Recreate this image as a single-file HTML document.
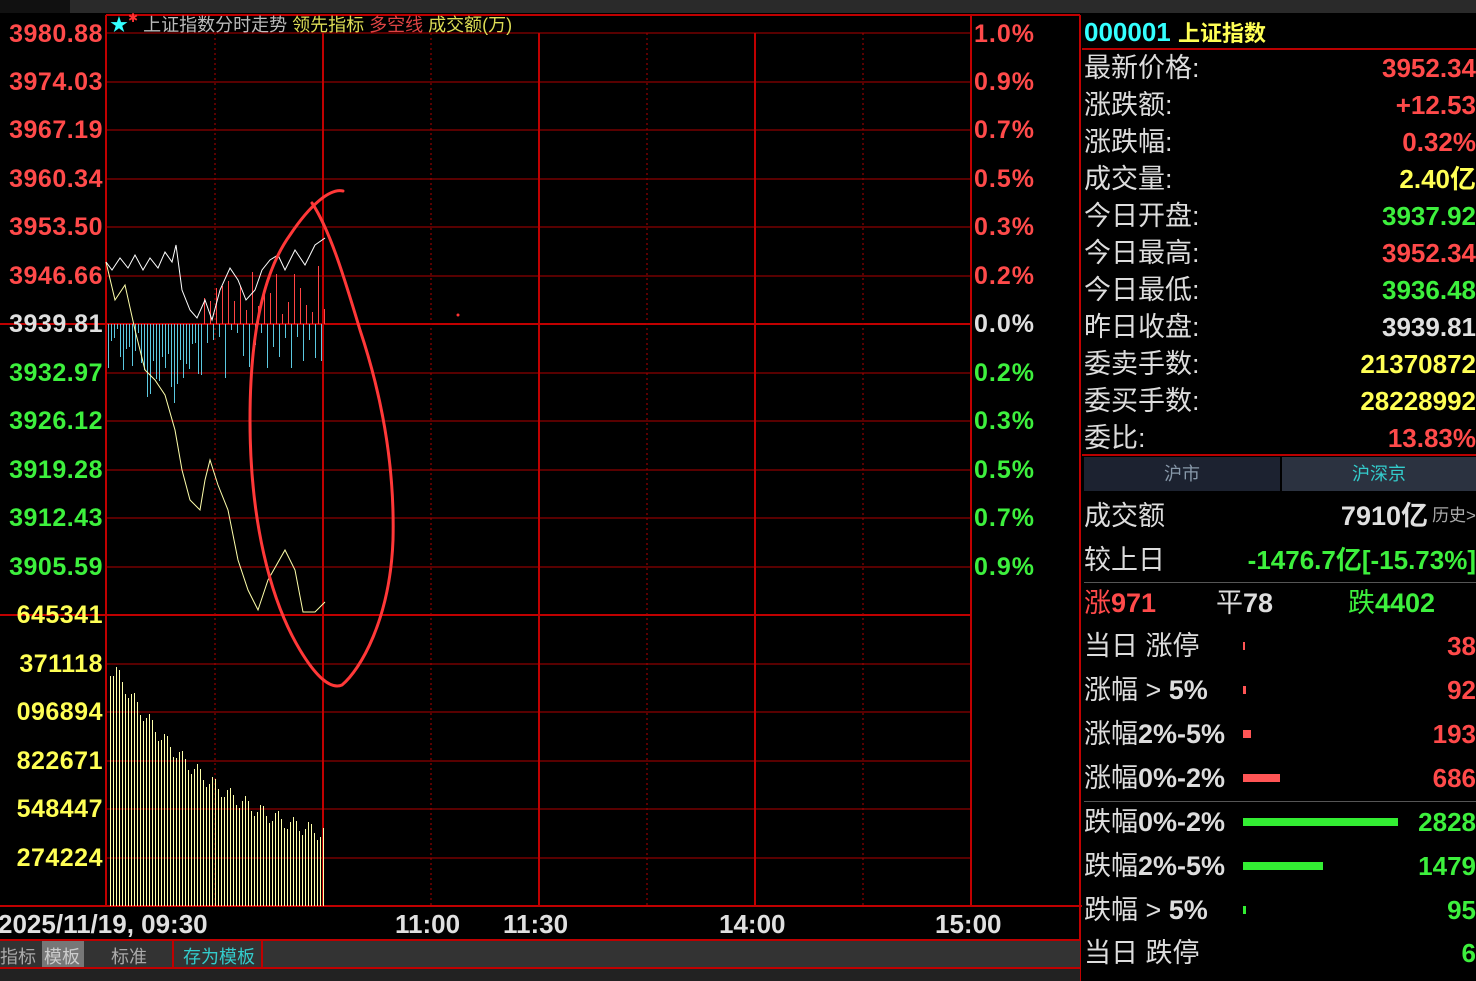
<!DOCTYPE html>
<html><head><meta charset="utf-8"><style>
*{margin:0;padding:0;box-sizing:border-box}
body{width:1476px;height:981px;background:#000;overflow:hidden;position:relative;font-family:"Liberation Sans","Noto Sans CJK SC",sans-serif}
.a{position:absolute;white-space:nowrap}
.lab{position:absolute;left:0;width:103px;text-align:right;font-weight:bold;font-size:25px;line-height:24px;letter-spacing:0.5px}
.pct{position:absolute;left:974px;font-weight:bold;font-size:25px;line-height:24px;letter-spacing:1px}
.r{color:#ff4a4a}.g{color:#3df03d}.y{color:#ffff55}.w{color:#e0e0e0}
.row{position:absolute;left:1084px;width:392px;height:36px;font-size:27px;line-height:36px;color:#ddd}
.row b{position:absolute;right:0;top:0;font-size:26px}
.st{position:absolute;left:1084px;width:392px;font-size:27px;line-height:40px;color:#ddd}
.st b{position:absolute;right:0;top:0;font-size:26px}
.st i{position:absolute;left:159px;top:16px;height:8px}
</style></head><body>
<div class="a" style="left:0;top:0;width:1476px;height:13px;background:#2a2a2a"></div>
<div class="a" style="left:0;top:0;width:70px;height:13px;background:#111"></div>
<svg class="a" style="left:0;top:0" width="1082" height="981">
<g stroke="#b00000" stroke-width="1">
<line x1="106" y1="33" x2="971" y2="33"/><line x1="106" y1="82" x2="971" y2="82"/><line x1="106" y1="130" x2="971" y2="130"/><line x1="106" y1="179" x2="971" y2="179"/><line x1="106" y1="227" x2="971" y2="227"/><line x1="106" y1="276" x2="971" y2="276"/><line x1="106" y1="373" x2="971" y2="373"/><line x1="106" y1="421" x2="971" y2="421"/><line x1="106" y1="470" x2="971" y2="470"/><line x1="106" y1="518" x2="971" y2="518"/><line x1="106" y1="567" x2="971" y2="567"/><line x1="106" y1="664" x2="971" y2="664"/><line x1="106" y1="712" x2="971" y2="712"/><line x1="106" y1="761" x2="971" y2="761"/><line x1="106" y1="809" x2="971" y2="809"/><line x1="106" y1="858" x2="971" y2="858"/>
</g>
<g stroke="#c00000" stroke-width="2">
<line x1="0" y1="324" x2="971" y2="324"/><line x1="0" y1="615" x2="971" y2="615"/><line x1="0" y1="906" x2="1082" y2="906"/>
<line x1="106" y1="15" x2="106" y2="906"/><line x1="323" y1="33" x2="323" y2="906"/><line x1="539" y1="33" x2="539" y2="906"/><line x1="755" y1="33" x2="755" y2="906"/><line x1="971" y1="15" x2="971" y2="906"/><line x1="1080" y1="15" x2="1080" y2="981"/>
<line x1="106" y1="15" x2="1080" y2="15"/>
</g>
<g stroke="#b00000" stroke-width="1" stroke-dasharray="2,3">
<line x1="215" y1="33" x2="215" y2="906"/><line x1="431" y1="33" x2="431" y2="906"/><line x1="647" y1="33" x2="647" y2="906"/><line x1="863" y1="33" x2="863" y2="906"/>
</g>
<g id="bars"></g>
<polyline fill="none" stroke="#ffffaa" stroke-width="1" points="106,262 115,300 125,285 135,330 145,370 155,380 165,395 175,430 182,470 190,500 200,510 205,480 210,460 218,485 228,510 238,560 248,590 258,610 268,580 285,550 295,570 303,612 315,612 325,602"/>
<polyline fill="none" stroke="#ffffff" stroke-width="1" points="106,262 112,270 120,258 128,268 135,255 143,270 150,258 158,268 165,252 172,262 176,245 182,290 190,310 197,318 205,300 212,320 220,290 230,268 238,280 246,300 255,290 262,270 270,260 278,255 285,270 295,250 305,265 315,245 325,238"/>
<path d="M343,191 C330,188 310,205 290,235 C265,270 250,330 250,420 C250,520 270,600 300,650 C315,675 330,690 342,685 C360,670 390,620 393,540 C395,460 380,390 360,330 C345,280 330,230 312,203" fill="none" stroke="#ff3838" stroke-width="3" stroke-linecap="round"/>
<circle cx="458" cy="315" r="1.5" fill="#f33"/>
<rect x="0" y="940" width="1080" height="28" fill="#333"/>
<rect x="42" y="941" width="42" height="27" fill="#777"/>
<rect x="0" y="968" width="1080" height="13" fill="#222"/>
<g stroke="#c00000" stroke-width="2"><line x1="0" y1="940" x2="1080" y2="940"/><line x1="0" y1="968" x2="1080" y2="968"/><line x1="173" y1="940" x2="173" y2="968"/><line x1="262" y1="940" x2="262" y2="968"/></g>
</svg>
<div class="a" style="left:110px;top:11px;font-size:18px;color:#bbb"><span style="color:#3ff">★</span><span style="color:#f33;font-size:12px;vertical-align:top">✱</span> 上证指数分时走势 <span style="color:#dd5">领先指标</span> <span style="color:#d44">多空线</span> <span style="color:#dd5">成交额(万)</span></div>
<div class="lab r" style="top:22px">3980.88</div><div class="lab r" style="top:70px">3974.03</div><div class="lab r" style="top:118px">3967.19</div><div class="lab r" style="top:167px">3960.34</div><div class="lab r" style="top:215px">3953.50</div><div class="lab r" style="top:264px">3946.66</div><div class="lab w" style="top:312px">3939.81</div><div class="lab g" style="top:361px">3932.97</div><div class="lab g" style="top:409px">3926.12</div><div class="lab g" style="top:458px">3919.28</div><div class="lab g" style="top:506px">3912.43</div><div class="lab g" style="top:555px">3905.59</div>
<div class="lab y" style="top:603px">645341</div><div class="lab y" style="top:652px">371118</div><div class="lab y" style="top:700px">096894</div><div class="lab y" style="top:749px">822671</div><div class="lab y" style="top:797px">548447</div><div class="lab y" style="top:846px">274224</div>
<div class="pct r" style="top:22px">1.0%</div><div class="pct r" style="top:70px">0.9%</div><div class="pct r" style="top:118px">0.7%</div><div class="pct r" style="top:167px">0.5%</div><div class="pct r" style="top:215px">0.3%</div><div class="pct r" style="top:264px">0.2%</div><div class="pct w" style="top:312px">0.0%</div><div class="pct g" style="top:361px">0.2%</div><div class="pct g" style="top:409px">0.3%</div><div class="pct g" style="top:458px">0.5%</div><div class="pct g" style="top:506px">0.7%</div><div class="pct g" style="top:555px">0.9%</div>
<div class="a w" style="left:-2px;top:909px;font-size:26px;font-weight:bold">2025/11/19, 09:30</div>
<div class="a w" style="left:395px;top:909px;font-size:26px;font-weight:bold">11:00</div>
<div class="a w" style="left:503px;top:909px;font-size:26px;font-weight:bold">11:30</div>
<div class="a w" style="left:719px;top:909px;font-size:26px;font-weight:bold">14:00</div>
<div class="a w" style="left:935px;top:909px;font-size:26px;font-weight:bold">15:00</div>
<div class="a" style="left:0;top:943px;font-size:18px;color:#aaa">指标</div>
<div class="a" style="left:44px;top:943px;font-size:18px;color:#ccc">模板</div>
<div class="a" style="left:111px;top:943px;font-size:18px;color:#aaa">标准</div>
<div class="a" style="left:183px;top:943px;font-size:18px;color:#3cc">存为模板</div>
<div class="a" style="left:1084px;top:16px;font-size:26px;font-weight:bold;color:#3ff">000001 <span style="color:#ff5;font-size:22px">上证指数</span></div>
<div class="a" style="left:1082px;top:48px;width:394px;height:2px;background:#b00"></div>
<div class="row" style="top:50px">最新价格:<b class="r">3952.34</b></div>
<div class="row" style="top:87px">涨跌额:<b class="r">+12.53</b></div>
<div class="row" style="top:124px">涨跌幅:<b class="r">0.32%</b></div>
<div class="row" style="top:161px">成交量:<b class="y">2.40亿</b></div>
<div class="row" style="top:198px">今日开盘:<b class="g">3937.92</b></div>
<div class="row" style="top:235px">今日最高:<b class="r">3952.34</b></div>
<div class="row" style="top:272px">今日最低:<b class="g">3936.48</b></div>
<div class="row" style="top:309px">昨日收盘:<b class="w">3939.81</b></div>
<div class="row" style="top:346px">委卖手数:<b class="y">21370872</b></div>
<div class="row" style="top:383px">委买手数:<b class="y">28228992</b></div>
<div class="row" style="top:420px">委比:<b class="r">13.83%</b></div>
<div class="a" style="left:1082px;top:454px;width:394px;height:2px;background:#b00"></div>
<div class="a" style="left:1084px;top:457px;width:196px;height:34px;background:#1c2230;color:#8899aa;font-size:18px;text-align:center;line-height:34px">沪市</div>
<div class="a" style="left:1282px;top:457px;width:194px;height:34px;background:#2b3240;color:#3cc;font-size:18px;text-align:center;line-height:34px">沪深京</div>
<div class="row" style="top:496px;height:40px;line-height:40px">成交额<b class="w" style="right:48px;font-size:27px">7910亿</b><span style="position:absolute;right:0;font-size:17px;color:#aaa">历史&gt;</span></div>
<div class="row" style="top:540px;height:40px;line-height:40px">较上日<b class="g" style="font-size:26px">-1476.7亿[-15.73%]</b></div>
<div class="a" style="left:1084px;top:582px;width:392px;height:1px;background:#555"></div>
<div class="a" style="left:1084px;top:585px;font-size:27px;line-height:36px"><span class="r">涨<b>971</b></span></div>
<div class="a" style="left:1216px;top:585px;font-size:27px;line-height:36px;color:#ddd">平<b>78</b></div>
<div class="a" style="left:1348px;top:585px;font-size:27px;line-height:36px" ><span class="g">跌<b>4402</b></span></div>
<div class="st" style="top:626px">当日 涨停<i style="width:2px;background:#f55"></i><b class="r">38</b></div>
<div class="st" style="top:670px">涨幅 &gt; <span style="font-weight:bold">5%</span><i style="width:3px;background:#f55"></i><b class="r">92</b></div>
<div class="st" style="top:714px">涨幅<span style="font-weight:bold">2%-5%</span><i style="width:8px;background:#f55"></i><b class="r">193</b></div>
<div class="st" style="top:758px">涨幅<span style="font-weight:bold">0%-2%</span><i style="width:37px;background:#f55"></i><b class="r">686</b></div>
<div class="a" style="left:1084px;top:801px;width:392px;height:1px;background:#555"></div>
<div class="st" style="top:802px">跌幅<span style="font-weight:bold">0%-2%</span><i style="width:155px;background:#3e3"></i><b class="g">2828</b></div>
<div class="st" style="top:846px">跌幅<span style="font-weight:bold">2%-5%</span><i style="width:80px;background:#3e3"></i><b class="g">1479</b></div>
<div class="st" style="top:890px">跌幅 &gt; <span style="font-weight:bold">5%</span><i style="width:3px;background:#3e3"></i><b class="g">95</b></div>
<div class="st" style="top:933px">当日 跌停<b class="g">6</b></div>
<script>
var g=document.getElementById('bars'),s='';
for(var x=110;x<=325;x+=3){var t=(x-110)/215;var h=Math.max(40,200*Math.exp(-t*2.0)+45+Math.sin(x*1.7)*8);if(x<114)h=230;
s+='<line x1="'+(x+0.5)+'" y1="906" x2="'+(x+0.5)+'" y2="'+Math.round(906-h)+'" stroke="#ffffaa" stroke-width="1"/>';}
for(var x=108;x<=325;x+=3){var v=Math.sin(x*0.37)*30+Math.cos(x*0.11)*20;
if(x>200&&x%2==0){s+='<line x1="'+(x+0.5)+'" y1="324" x2="'+(x+0.5)+'" y2="'+Math.round(324-Math.abs(v)-10)+'" stroke="#f44"/>';}
else{s+='<line x1="'+(x+0.5)+'" y1="324" x2="'+(x+0.5)+'" y2="'+Math.round(324+Math.abs(v)+(x>140&&x<190?30:5))+'" stroke="#5bc8e0"/>';}}
g.innerHTML=s;
</script>
</body></html>
